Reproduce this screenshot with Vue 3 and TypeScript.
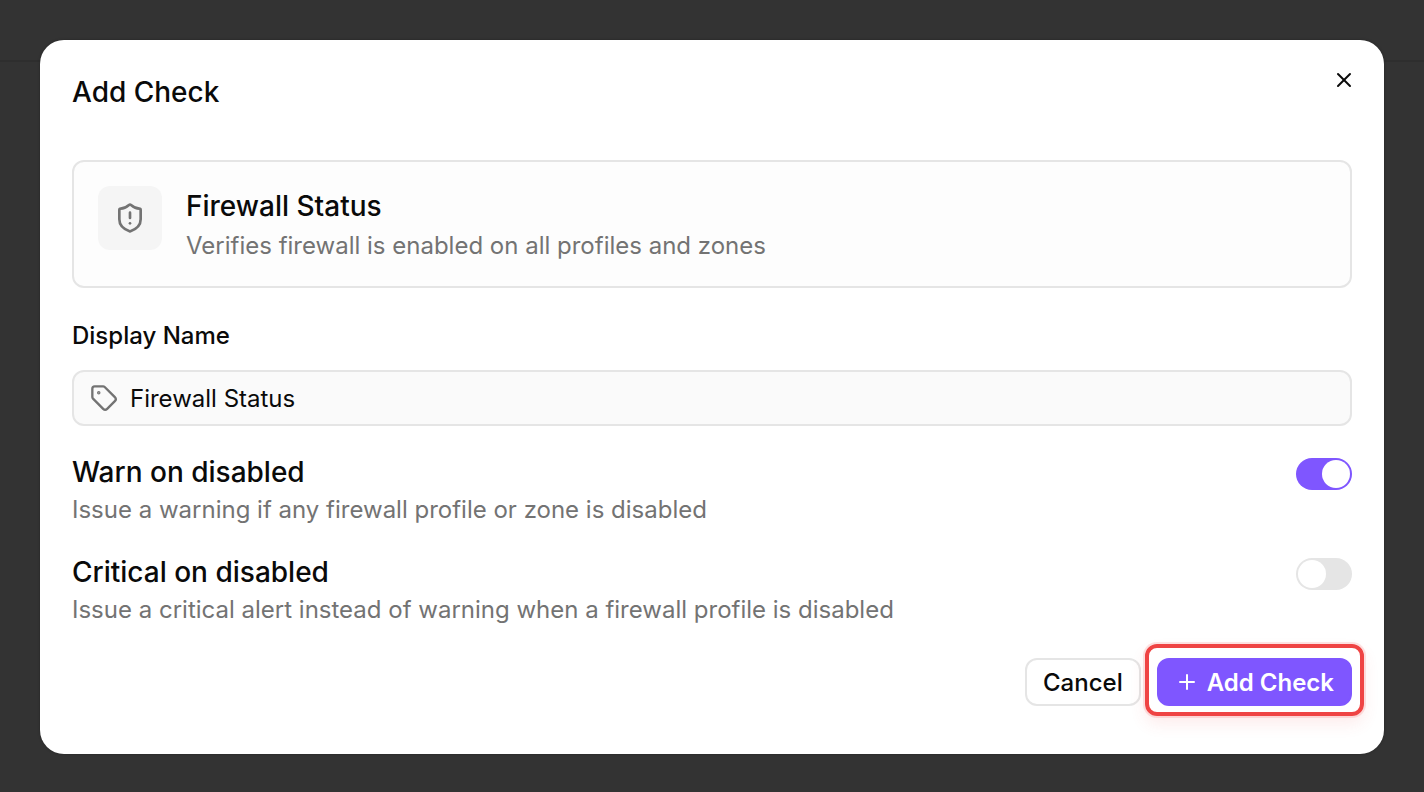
<script setup lang="ts">
import { reactive, ref } from 'vue'

interface Option {
  id: string
  title: string
  description: string
  enabled: boolean
}

const displayName = ref('Firewall Status')

const options = reactive<Option[]>([
  {
    id: 'warn',
    title: 'Warn on disabled',
    description: 'Issue a warning if any firewall profile or zone is disabled',
    enabled: true,
  },
  {
    id: 'critical',
    title: 'Critical on disabled',
    description: 'Issue a critical alert instead of warning when a firewall profile is disabled',
    enabled: false,
  },
])
</script>

<template>
  <div class="backdrop">
    <div class="page-header"></div>
    <main class="dialog" role="dialog" aria-modal="true" aria-labelledby="dialog-title">
      <header class="dialog-header">
        <h1 id="dialog-title" class="title">Add Check</h1>
        <button class="close" type="button" aria-label="Close">
          <svg width="24" height="24" viewBox="0 0 24 24" fill="none" stroke="currentColor" stroke-width="2" stroke-linecap="round" stroke-linejoin="round">
            <path d="M18 6 6 18" />
            <path d="m6 6 12 12" />
          </svg>
        </button>
      </header>

      <section class="card">
        <div class="card-icon">
          <svg width="32" height="32" viewBox="0 0 24 24" fill="none" stroke="currentColor" stroke-width="2" stroke-linecap="round" stroke-linejoin="round">
            <path d="M20 13c0 5-3.5 7.5-7.66 8.95a1 1 0 0 1-.67-.01C7.5 20.5 4 18 4 13V6a1 1 0 0 1 1-1c2 0 4.5-1.2 6.24-2.72a1.17 1.17 0 0 1 1.52 0C14.51 3.81 17 5 19 5a1 1 0 0 1 1 1z" />
            <path d="M12 8v4" />
            <path d="M12 16h.01" />
          </svg>
        </div>
        <div class="card-text">
          <h2 class="title">Firewall Status</h2>
          <p class="description">Verifies firewall is enabled on all profiles and zones</p>
        </div>
      </section>

      <div class="field">
        <label class="field-label" for="display-name">Display Name</label>
        <div class="field-box">
          <svg width="28" height="28" viewBox="0 0 24 24" fill="none" stroke="currentColor" stroke-width="2" stroke-linecap="round" stroke-linejoin="round">
            <path d="M12.586 2.586A2 2 0 0 0 11.172 2H4a2 2 0 0 0-2 2v7.172a2 2 0 0 0 .586 1.414l8.704 8.704a2.426 2.426 0 0 0 3.42 0l6.58-6.58a2.426 2.426 0 0 0 0-3.42z" />
            <circle cx="7.5" cy="7.5" r=".5" fill="currentColor" />
          </svg>
          <input id="display-name" v-model="displayName" class="field-input" type="text" />
        </div>
      </div>

      <div class="options">
        <div v-for="option in options" :key="option.id" class="option">
          <div class="option-text">
            <label class="title" :for="option.id">{{ option.title }}</label>
            <p class="description">{{ option.description }}</p>
          </div>
          <input :id="option.id" v-model="option.enabled" class="switch" type="checkbox" role="switch" />
        </div>
      </div>

      <footer class="actions">
        <button class="button secondary" type="button">Cancel</button>
        <div class="highlight">
          <button class="button primary" type="button">
            <svg width="24" height="24" viewBox="0 0 24 24" fill="none" stroke="currentColor" stroke-width="2" stroke-linecap="round" stroke-linejoin="round">
              <path d="M5 12h14" />
              <path d="M12 5v14" />
            </svg>
            Add Check
          </button>
        </div>
      </footer>
    </main>
  </div>
</template>

<style>
body {
  margin: 0;
  background: #333333;
}
</style>

<style scoped>
.backdrop {
  position: relative;
  box-sizing: border-box;
  min-height: 100vh;
  padding: 40px 40px 38px;
  background: #333333;
  color: #0a0a0a;
  font-family: Inter, "Liberation Sans", sans-serif;
}

.page-header {
  position: absolute;
  inset: 0 0 auto;
  height: 60px;
  border-bottom: 2px solid #2e2e2e;
}

.dialog {
  position: relative;
  box-sizing: border-box;
  padding: 32px 32px 48px;
  border-radius: 24px;
  background: #ffffff;
  box-shadow: 0 0 3px rgba(0, 0, 0, 0.3);
}

.dialog-header {
  display: flex;
  align-items: flex-start;
  justify-content: space-between;
  height: 88px;
}

.title {
  margin: 0;
  font-size: 28px;
  font-weight: 500;
  line-height: 40px;
}

.description {
  margin: 0;
  color: #737373;
  font-size: 24px;
  line-height: 36px;
}

.close {
  display: flex;
  margin: -4px -4px 0 0;
  padding: 0;
  border: 0;
  background: none;
  color: #0a0a0a;
}

.card {
  display: flex;
  gap: 24px;
  padding: 24px 24px 20px;
  border: 2px solid #e5e5e5;
  border-radius: 12px;
  background: #fdfdfd;
}

.card-icon {
  display: grid;
  place-items: center;
  width: 64px;
  height: 64px;
  border-radius: 12px;
  background: #f5f5f5;
  color: #737373;
}

.card-text .description {
  line-height: 40px;
}

.field {
  display: flex;
  flex-direction: column;
  gap: 18px;
  margin-top: 32px;
}

.field-label {
  font-size: 24px;
  font-weight: 500;
  line-height: 32px;
}

.field-box {
  display: flex;
  align-items: center;
  gap: 12px;
  box-sizing: border-box;
  height: 56px;
  padding: 0 16px;
  border: 2px solid #e5e5e5;
  border-radius: 12px;
  background: #fafafa;
  color: #737373;
}

.field-input {
  flex: 1;
  min-width: 0;
  padding: 0;
  border: 0;
  outline: 0;
  background: none;
  color: #0a0a0a;
  font: inherit;
  font-size: 24px;
}

.options {
  display: flex;
  flex-direction: column;
  gap: 24px;
  margin-top: 26px;
}

.option {
  display: flex;
  justify-content: space-between;
  align-items: flex-start;
  gap: 24px;
}

.option-text {
  display: flex;
  flex-direction: column;
}

.switch {
  appearance: none;
  display: flex;
  flex: none;
  box-sizing: border-box;
  width: 56px;
  height: 32px;
  margin: 6px 0 0;
  padding: 2px;
  border-radius: 16px;
  background: #e5e5e5;
}

.switch::before {
  content: "";
  width: 28px;
  height: 28px;
  border-radius: 50%;
  background: #ffffff;
}

.switch:checked {
  justify-content: flex-end;
  background: #7f56ff;
}

.actions {
  display: flex;
  justify-content: flex-end;
  gap: 16px;
  margin-top: 30px;
}

.button {
  display: flex;
  align-items: center;
  gap: 8px;
  box-sizing: border-box;
  height: 48px;
  padding: 0 16px;
  border: 2px solid #e5e5e5;
  border-radius: 12px;
  background: #ffffff;
  color: #0a0a0a;
  font: inherit;
  font-size: 24px;
  font-weight: 500;
}

.primary {
  border-color: #7f56ff;
  background: #7f56ff;
  color: #ffffff;
  font-weight: 600;
}

.highlight {
  margin: -14px -12px -10px;
  padding: 10px 8px 6px;
  border: 4px solid #ef4444;
  border-radius: 12px;
  box-shadow: 0 0 0 2px rgba(239, 68, 68, 0.15), 0 8px 16px rgba(239, 68, 68, 0.1);
}
</style>
